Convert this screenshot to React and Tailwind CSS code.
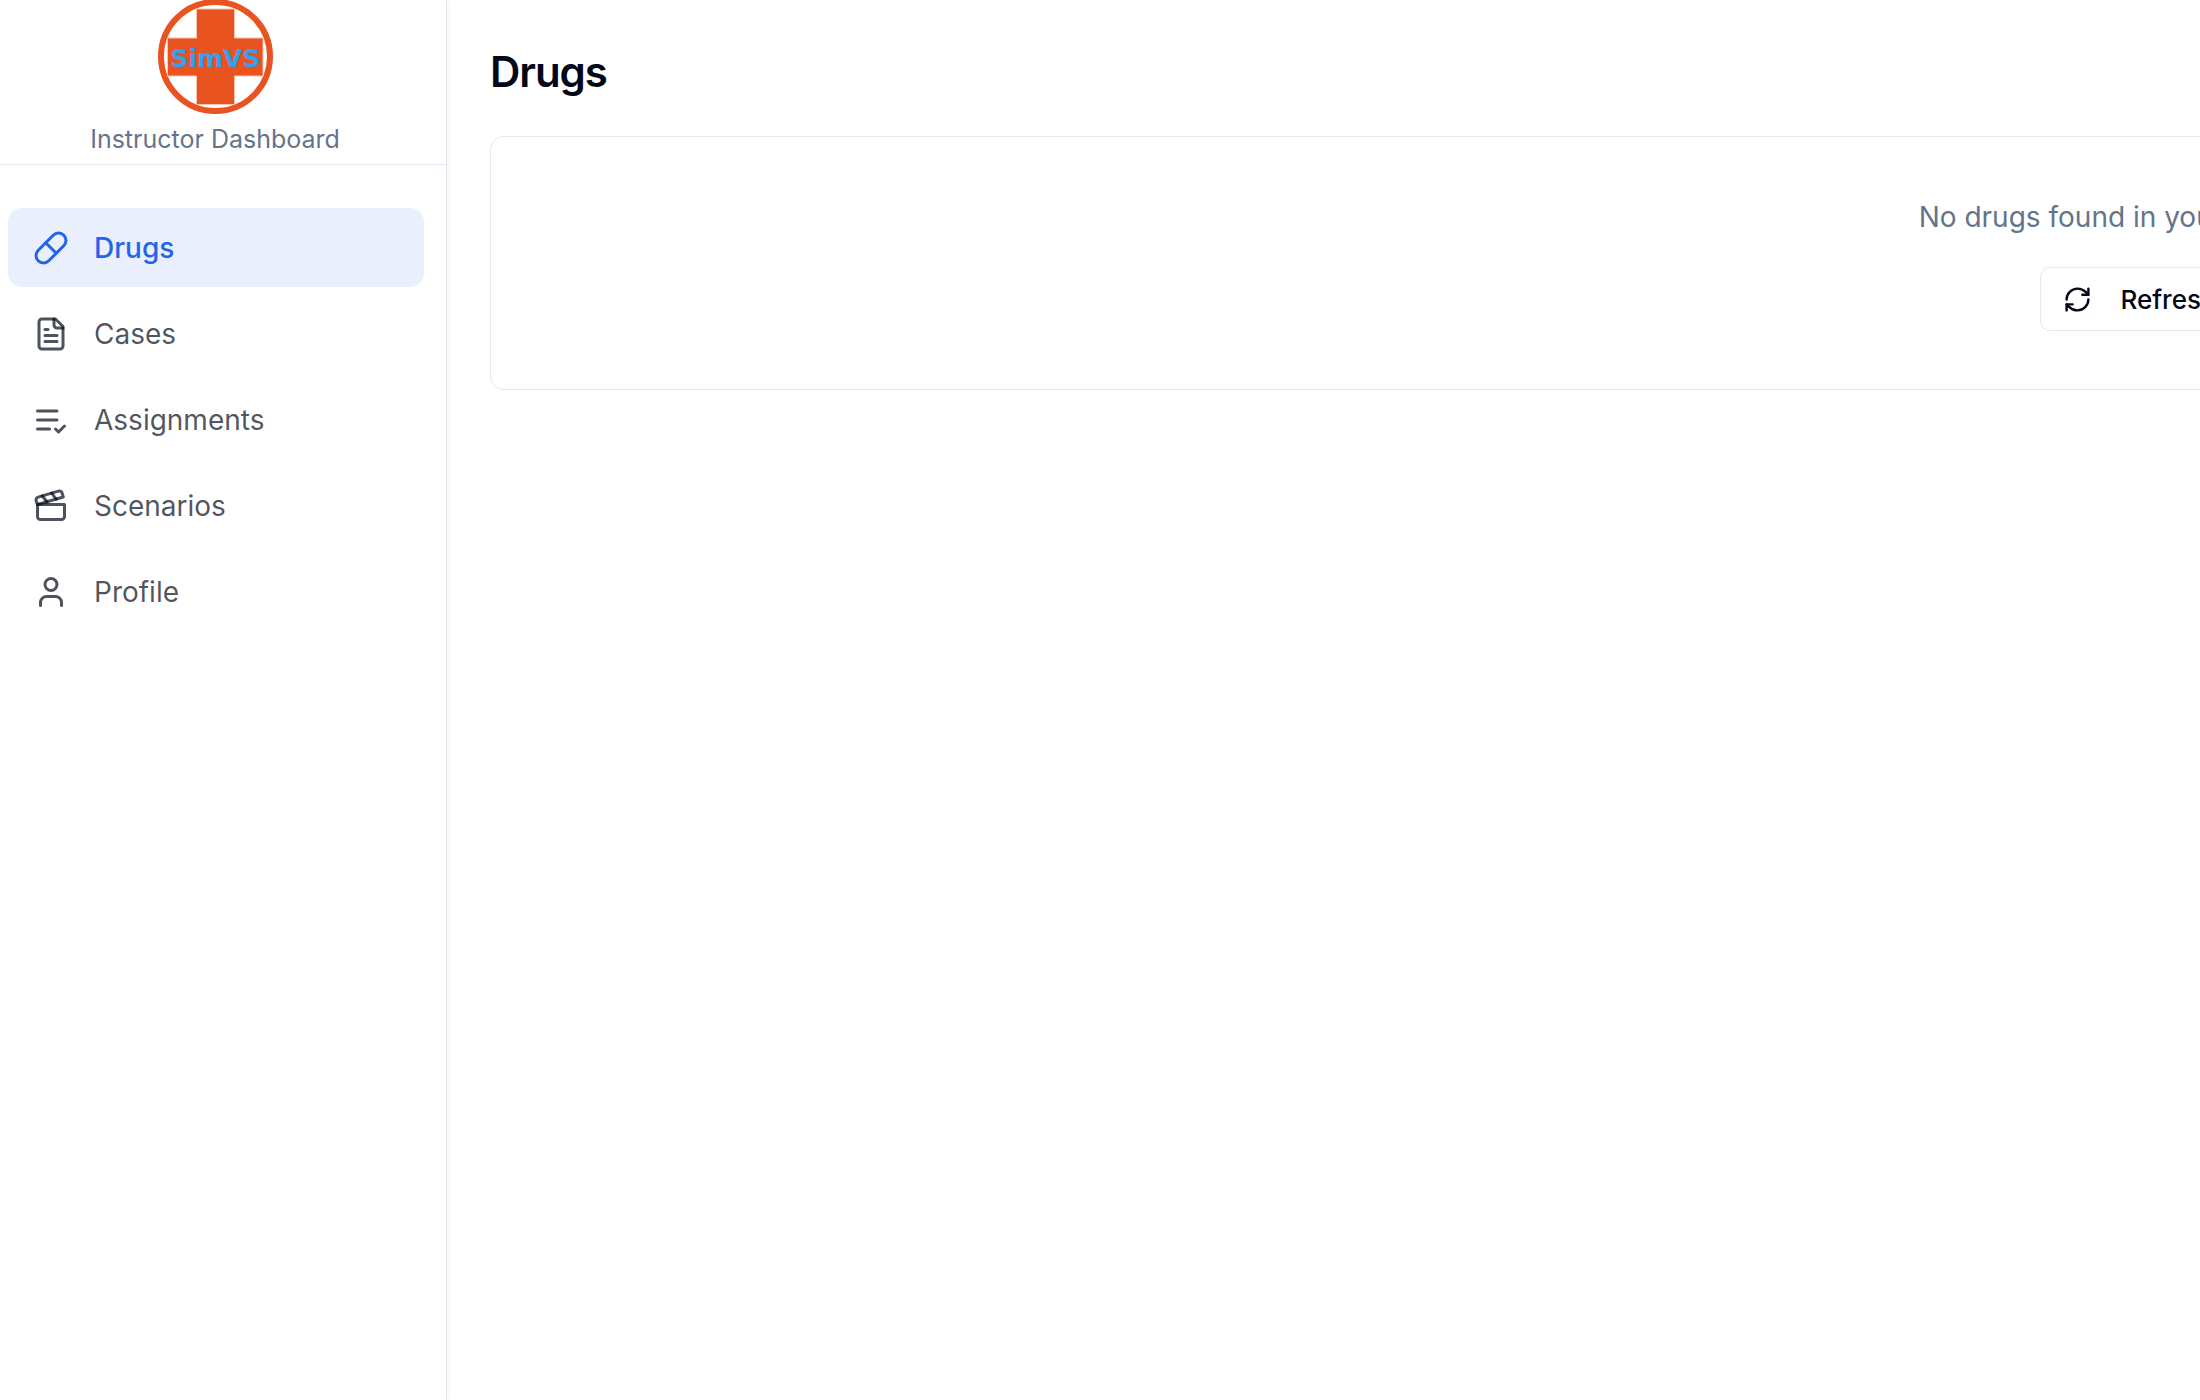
import { Pill, RefreshCw, User } from "lucide-react";
import clsx from "clsx";

const StrokeIcon = ({ className, children }) => (
  <svg
    viewBox="0 0 24 24"
    fill="none"
    stroke="currentColor"
    strokeWidth="2"
    strokeLinecap="round"
    strokeLinejoin="round"
    className={className}
    aria-hidden="true"
  >
    {children}
  </svg>
);

const CasesIcon = ({ className }) => (
  <StrokeIcon className={className}>
    <path d="M15 2H6a2 2 0 0 0-2 2v16a2 2 0 0 0 2 2h12a2 2 0 0 0 2-2V7Z" />
    <path d="M14 2v4a2 2 0 0 0 2 2h4" />
    <path d="M10 9H8" />
    <path d="M16 13H8" />
    <path d="M16 17H8" />
  </StrokeIcon>
);

const AssignmentsIcon = ({ className }) => (
  <StrokeIcon className={className}>
    <path d="M11 18H3" />
    <path d="m15 18 2 2 4-4" />
    <path d="M16 12H3" />
    <path d="M16 6H3" />
  </StrokeIcon>
);

const ScenariosIcon = ({ className }) => (
  <StrokeIcon className={className}>
    <path d="M20.2 6 3 11l-.9-2.4c-.3-1.1.3-2.2 1.3-2.5l13.5-4c1.1-.3 2.2.3 2.5 1.3Z" />
    <path d="m6.2 5.3 3.1 3.9" />
    <path d="m12.4 3.4 3.1 4" />
    <path d="M3 11h18v8a2 2 0 0 1-2 2H5a2 2 0 0 1-2-2Z" />
  </StrokeIcon>
);

const Logo = () => (
  <svg viewBox="0 0 115 115" className="size-[115px]" role="img" aria-label="SimVS">
    <circle cx="57.5" cy="56.5" r="54.5" fill="#fff" stroke="#e8531f" strokeWidth="6" />
    <path
      d="M38.5 9h38v29h28.5v38H76.5v28.5H38.5V76H9.5V38h29Z"
      fill="#e8531f"
      stroke="#f7c4b1"
      strokeWidth="1"
    />
    <text
      x="57.5"
      y="67"
      textAnchor="middle"
      fill="#35a0ee"
      fontFamily="DejaVu Sans, sans-serif"
      fontWeight="700"
      fontSize="25"
    >
      SimVS
    </text>
  </svg>
);

const links = [
  { label: "Drugs", icon: Pill },
  { label: "Cases", icon: CasesIcon },
  { label: "Assignments", icon: AssignmentsIcon },
  { label: "Scenarios", icon: ScenariosIcon },
  { label: "Profile", icon: User },
];

const Sidebar = () => (
  <aside className="z-10 w-[447px] shrink-0 border-r border-[#e2e8f0] bg-white shadow-[1px_0_6px_rgba(0,0,0,0.06)]">
    <div className="flex flex-col items-center border-b border-[#e2e8f0] pr-4 pb-2">
      <Logo />
      <p className="mt-2 text-[25px] leading-[33px] text-[#64748b]">Instructor Dashboard</p>
    </div>
    <nav className="flex flex-col gap-[7px] py-[43px] pr-[22px] pl-2">
      {links.map(({ label, icon: Icon }, i) => (
        <a
          key={label}
          href={`#${label.toLowerCase()}`}
          aria-current={i === 0 ? "page" : undefined}
          className={clsx(
            "flex h-[79px] items-center gap-[25px] rounded-[14px] px-[25px] text-[28px]",
            i === 0
              ? "bg-[#e9effd] font-medium text-[#2563eb]"
              : "text-[#020817]/70 hover:bg-slate-100"
          )}
        >
          <Icon className="size-9 shrink-0" />
          {label}
        </a>
      ))}
    </nav>
  </aside>
);

export default function App() {
  return (
    <div className="flex min-h-screen overflow-hidden bg-white font-['Inter',sans-serif] text-[#020817]">
      <Sidebar />
      <main className="min-w-0 flex-1 px-[43px] py-10">
        <h1 className="mb-8 text-[42px] leading-[64px] font-semibold tracking-tight">Drugs</h1>
        {/* Empty state runs past the right edge of the window */}
        <section className="flex w-[150vw] flex-col items-center rounded-[14px] border border-[#e2e8f0] py-[58px]">
          <p className="mb-7 text-[28px] leading-[44px] text-[#64748b]">
            No drugs found in your inventory.
          </p>
          <button
            type="button"
            className="flex h-16 items-center gap-7 rounded-[10px] border border-[#e2e8f0] px-[22px] text-[26px] font-medium hover:bg-slate-100"
          >
            <RefreshCw className="size-[29px]" />
            Refresh
          </button>
        </section>
      </main>
    </div>
  );
}
